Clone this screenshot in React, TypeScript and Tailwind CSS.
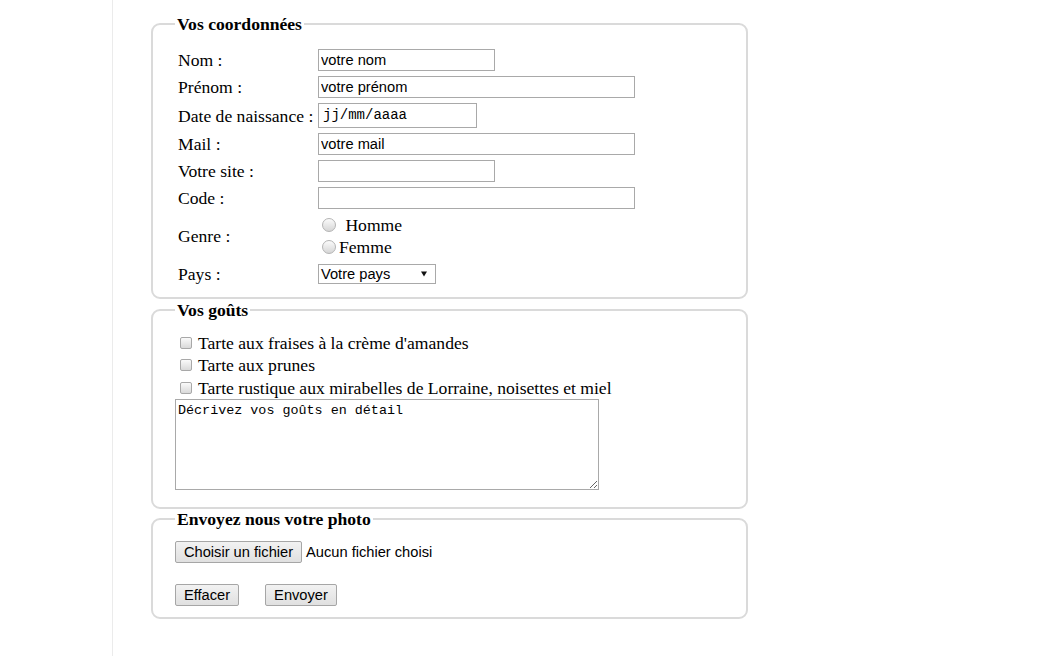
import React from "react";

const labelCls =
  "w-[143px] shrink-0 pl-[3px] text-[17.6px] leading-[20px] text-black whitespace-nowrap";
const inputCls =
  "h-[22px] border border-[#a9a9a9] bg-white px-[2px] font-['Liberation_Sans',Arial,sans-serif] text-[14.67px] leading-[18px] text-black outline-none";
const btnCls =
  "h-[22px] border border-[#a6a6a6] rounded-[2px] bg-linear-to-b from-[#f2f2f2] to-[#e0e0e0] font-['Liberation_Sans',Arial,sans-serif] text-[14.67px] leading-[18px] text-black text-center";
const radioCls =
  "inline-block w-[14px] h-[14px] shrink-0 rounded-full border border-[#b4b4b4] bg-linear-to-b from-[#fbfbfb] to-[#d6d6d6]";
const checkCls =
  "inline-block w-[12px] h-[12px] shrink-0 rounded-[2px] border border-[#a8a8a8] bg-linear-to-b from-[#fafafa] to-[#d9d9d9]";
const fieldsetCls = "rounded-[9px] border-2 border-[#dadada] pl-[22px] pr-[22px]";
const legendCls = "px-[2px] text-[17.6px] leading-[20px] font-bold text-black whitespace-nowrap";

export default function App() {
  return (
    <div className="flex min-h-[656px] w-full bg-white text-black font-['Liberation_Serif','Times_New_Roman',serif]">
      <div className="w-[112px] shrink-0" />
      <div className="flex-1 border-l border-[#ebebeb] pl-[38px] pt-[14px]">
        <form className="flex w-[597px] flex-col" onSubmit={(e) => e.preventDefault()}>
          {/* Vos coordonnées */}
          <fieldset className={fieldsetCls + " pt-[15px] pb-[13px]"}>
            <legend className={legendCls}>Vos coordonnées</legend>
            <div className="flex flex-col">
              <div className="flex h-[22px] items-center">
                <span className={labelCls}>Nom :</span>
                <input className={inputCls + " w-[177px]"} value="votre nom" readOnly />
              </div>
              <div className="mt-[5px] flex h-[22px] items-center">
                <span className={labelCls}>Prénom :</span>
                <input className={inputCls + " w-[317px]"} value="votre prénom" readOnly />
              </div>
              <div className="mt-[5px] flex h-[25px] items-center">
                <span className={labelCls}>Date de naissance :</span>
                <div className="flex h-[25px] w-[159px] items-center border border-[#a9a9a9] bg-white pl-[4px] font-['Liberation_Mono','Courier_New',monospace] text-[14px] text-black">
                  jj/mm/aaaa
                </div>
              </div>
              <div className="mt-[5px] flex h-[22px] items-center">
                <span className={labelCls}>Mail :</span>
                <input className={inputCls + " w-[317px]"} value="votre mail" readOnly />
              </div>
              <div className="mt-[5px] flex h-[22px] items-center">
                <span className={labelCls}>Votre site :</span>
                <input className={inputCls + " w-[177px]"} value="" readOnly />
              </div>
              <div className="mt-[5px] flex h-[22px] items-center">
                <span className={labelCls}>Code :</span>
                <input className={inputCls + " w-[317px]"} value="" readOnly />
              </div>
              <div className="mt-[3px] flex h-[47px] items-center">
                <span className={labelCls}>Genre :</span>
                <div className="flex flex-col">
                  <div className="flex h-[22px] items-center text-[17.6px] leading-[20px]">
                    <span className={radioCls + " ml-[4px] mr-[3px]"} />
                    <span className="ml-[2px]">{"\u00a0"}Homme</span>
                  </div>
                  <div className="flex h-[22px] items-center text-[17.6px] leading-[20px]">
                    <span className={radioCls + " ml-[4px] mr-[3px]"} />
                    <span>Femme</span>
                  </div>
                </div>
              </div>
              <div className="mt-[5px] flex h-[20px] items-center">
                <span className={labelCls}>Pays :</span>
                <div className="flex h-[20px] w-[118px] items-center justify-between border border-[#a9a9a9] bg-white pl-[2px] pr-[8px] font-['Liberation_Sans',Arial,sans-serif] text-[14.67px] leading-[18px] text-black">
                  <span>Votre pays</span>
                  <svg width="6" height="6" viewBox="0 0 6 6">
                    <path d="M0 0.5 L6 0.5 L3 5.5 Z" fill="#111" />
                  </svg>
                </div>
              </div>
            </div>
          </fieldset>

          {/* Vos goûts */}
          <fieldset className={fieldsetCls + " mt-[1px] pt-[11px] pb-[17px]"}>
            <legend className={legendCls}>Vos goûts</legend>
            <div className="flex h-[23px] items-center text-[17.6px] leading-[20px]">
              <span className={checkCls + " ml-[5px] mr-[6px]"} />
              <span>Tarte aux fraises à la crème d'amandes</span>
            </div>
            <div className="flex h-[22px] items-center text-[17.6px] leading-[20px]">
              <span className={checkCls + " ml-[5px] mr-[6px]"} />
              <span>Tarte aux prunes</span>
            </div>
            <div className="flex h-[23px] items-center text-[17.6px] leading-[20px]">
              <span className={checkCls + " ml-[5px] mr-[6px]"} />
              <span>Tarte rustique aux mirabelles de Lorraine, noisettes et miel</span>
            </div>
            <textarea
              className="block h-[91px] w-[424px] border border-[#a9a9a9] bg-white px-[2px] pt-[3px] font-['Liberation_Mono','Courier_New',monospace] text-[13.4px] leading-[16px] text-black outline-none"
              value="Décrivez vos goûts en détail"
              readOnly
            />
          </fieldset>

          {/* Envoyez nous votre photo */}
          <fieldset className={fieldsetCls + " pt-[12px] pb-[11px]"}>
            <legend className={legendCls}>Envoyez nous votre photo</legend>
            <div className="flex h-[22px] items-center">
              <button type="button" className={btnCls + " w-[127px]"}>
                Choisir un fichier
              </button>
              <span className="ml-[4px] font-['Liberation_Sans',Arial,sans-serif] text-[14.67px] leading-[18px] text-black">
                Aucun fichier choisi
              </span>
            </div>
            <div className="mt-[21px] flex gap-[26px]">
              <button type="reset" className={btnCls + " w-[64px]"}>
                Effacer
              </button>
              <button type="submit" className={btnCls + " w-[72px]"}>
                Envoyer
              </button>
            </div>
          </fieldset>
        </form>
      </div>
    </div>
  );
}
